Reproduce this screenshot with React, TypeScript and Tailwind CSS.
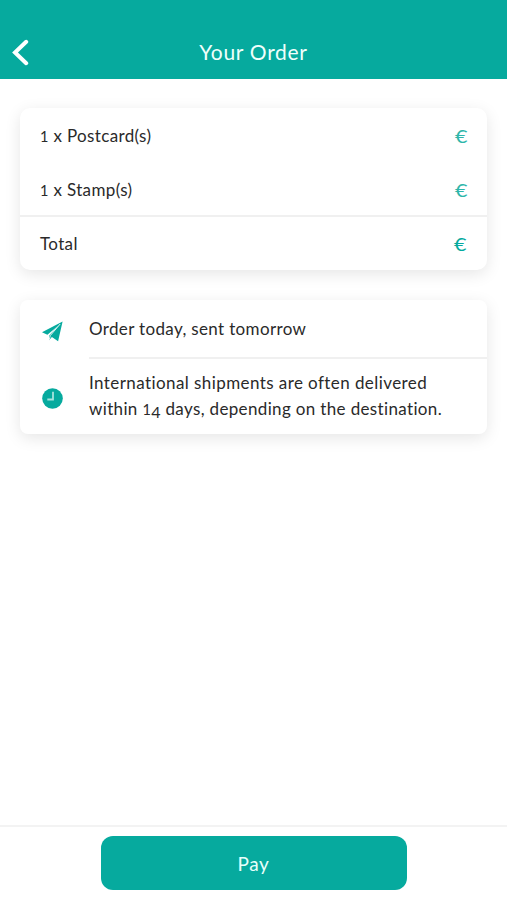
import React from 'react';

function One() {
  return <span className="text-[14.5px]">1</span>;
}

function Euro({ bold = false }: { bold?: boolean }) {
  return (
    <span className={`inline-block origin-right scale-x-[1.2] text-[18px] leading-none tracking-normal ${bold ? 'text-[#06aa9e]' : 'text-[#2fb6aa]'}`}>
      €
    </span>
  );
}

type RowProps = { label: React.ReactNode; className?: string; bold?: boolean };

function PriceRow({ label, className = '', bold = false }: RowProps) {
  return (
    <div className={`flex items-center justify-between pl-5 ${bold ? 'pr-[21px]' : 'pr-5'} ${className}`}>
      <span>{label}</span>
      <Euro bold={bold} />
    </div>
  );
}

export default function App() {
  return (
    <div className="flex h-[900px] w-full flex-col overflow-hidden bg-white font-['Lato','Open_Sans',sans-serif] text-[17px] tracking-[0.35px] text-[#2a2a2a]">
      <header className="flex h-[79px] shrink-0 items-end bg-[#06aa9e] text-white">
        <button className="flex h-[54px] w-[60px] items-center pl-3" aria-label="Back">
          <svg width="17" height="27" viewBox="0 0 17 27" fill="none" stroke="currentColor" strokeWidth="4">
            <path d="M14.2 2.8 3 13.5l11.2 10.7" strokeLinecap="round" strokeLinejoin="miter" />
          </svg>
        </button>
        <h1 className="flex h-[54px] flex-1 items-center justify-center text-[21px] tracking-[0.7px] text-[#effffc]">Your Order</h1>
        <div className="w-[60px]" />
      </header>

      <main className="flex flex-1 flex-col gap-[30px] px-5 pt-[29px]">
        <section className="h-[162px] rounded-[10px] bg-white shadow-[0_4px_16px_rgba(0,0,0,0.10)]">
          <PriceRow label={<><One /> x Postcard(s)</>} className="h-[54px] pt-px" />
          <PriceRow label={<><One /> x Stamp(s)</>} className="h-[55px] border-b-2 border-[#f0f0f0] pt-0.5" />
          <PriceRow label="Total" className="h-[53px]" bold />
        </section>

        <section className="h-[134px] rounded-[8px] bg-white shadow-[0_4px_16px_rgba(0,0,0,0.10)]">
          <div className="flex h-[59px]">
            <div className="flex w-[69px] items-center pl-[22px] pt-[3px]">
              <svg width="21" height="21" viewBox="0 0 21 21" fill="#06aa9e">
                <path d="M20.6.4 0 11.2l5.4 2.6L16.5 4.500 7.2 14.600l-.2 4.600 2.900-3.200 6.200 4.200z" />
                <path d="M18.200 3 8.300 14.500l-1.100 4.300" fill="none" stroke="#fff" strokeWidth=".9" />
              </svg>
            </div>
            <div className="flex flex-1 items-center border-b-2 border-[#f0f0f0]">Order today, sent tomorrow</div>
          </div>
          <div className="flex h-[75px]">
            <div className="flex w-[69px] items-center pl-[22px] pt-[3px]">
              <svg width="21" height="21" viewBox="0 0 21 21">
                <circle cx="10.5" cy="10.5" r="10.3" fill="#06aa9e" />
                <path d="M11 3.8v7.7H5.3" fill="none" stroke="#a6e3dd" strokeWidth="1.8" />
              </svg>
            </div>
            <div className="flex flex-1 flex-col justify-center whitespace-nowrap leading-[26px]">
              <span className="tracking-[0.42px]">International shipments are often delivered</span>
              <span>within <One /><span className="inline-block translate-y-[3px] text-[16px] leading-none">4</span> days, depending on the destination.</span>
            </div>
          </div>
        </section>
      </main>

      <footer className="flex h-[75px] shrink-0 items-start justify-center border-t-2 border-[#f3f3f3] pt-[9px]">
        <button className="h-[54px] w-[306px] rounded-[12px] bg-[#06aa9e] pt-0.5 text-[19px] tracking-[0.6px] text-[#e6fffb]">Pay</button>
      </footer>
    </div>
  );
}
